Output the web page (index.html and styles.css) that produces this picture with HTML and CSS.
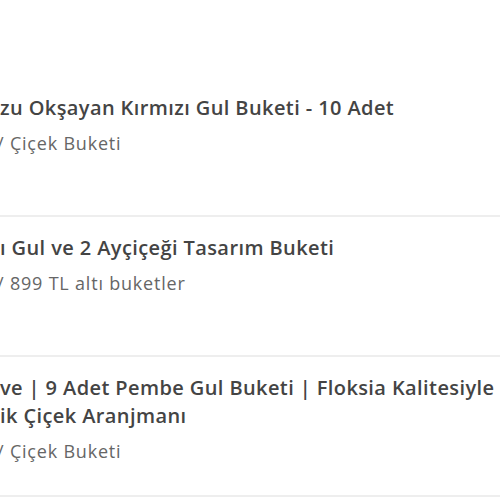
FILE: index.html
```html
<!DOCTYPE html>
<html lang="tr">
<head>
<meta charset="utf-8">
<link rel="stylesheet" href="styles.css">
</head>
<body>
<ul class="list">
  <li class="item">
    <div class="info">
      <a class="title">zu Okşayan Kırmızı Gul Buketi - 10 Adet</a>
      <p class="cat">/ Çiçek Buketi</p>
    </div>
  </li>
  <li class="item">
    <div class="info">
      <a class="title">ı Gul ve 2 Ayçiçeği Tasarım Buketi</a>
      <p class="cat">/ 899 TL altı buketler</p>
    </div>
  </li>
  <li class="item">
    <div class="info">
      <a class="title">ve | 9 Adet Pembe Gul Buketi | Floksia Kalitesiyle ik Çiçek Aranjmanı</a>
      <p class="cat">/ Çiçek Buketi</p>
    </div>
  </li>
</ul>
</body>
</html>
```
FILE: styles.css
```css
html, body {
  margin: 0;
  padding: 0;
  background: #fff;
  overflow: hidden;
}
body {
  font-family: "Open Sans", "Noto Sans", sans-serif;
  width: 500px;
  height: 500px;
}
.list {
  list-style: none;
  margin: 77px 0 0 0;
  padding: 0;
}
.item {
  height: 138px;
  border-bottom: 2px solid #eeeeee;
  box-sizing: content-box;
}
.info {
  padding-top: 17px;
  padding-right: 2px;
}
.title {
  display: block;
  font-size: 20px;
  font-weight: 600;
  line-height: 28px;
  letter-spacing: 0.4px;
  color: #444;
}
.cat {
  margin: 9px 0 0 -3px;
  font-size: 18px;
  line-height: 24px;
  letter-spacing: 0.8px;
  color: #666;
}
```
